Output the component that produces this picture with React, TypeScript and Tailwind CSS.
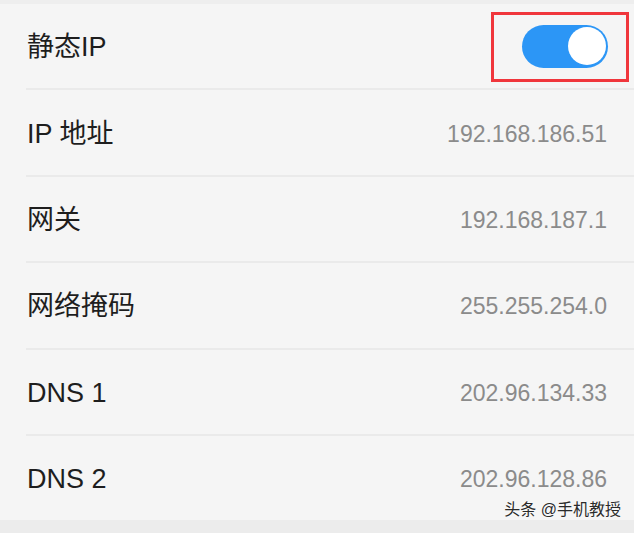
import React from 'react'

interface Row {
  label: string
  value?: string
}

const rows: Row[] = [
  { label: '静态IP' },
  { label: 'IP 地址', value: '192.168.186.51' },
  { label: '网关', value: '192.168.187.1' },
  { label: '网络掩码', value: '255.255.254.0' },
  { label: 'DNS 1', value: '202.96.134.33' },
  { label: 'DNS 2', value: '202.96.128.86' },
]

function Toggle() {
  return (
    <div className="relative">
      {/* annotation box */}
      <div className="absolute -left-[31px] -right-[21px] -top-[13px] -bottom-[14px] border-[3px] border-[#f0363c]" />
      <div className="w-[86px] h-[43px] rounded-full bg-[#2c96f6] flex items-center justify-end pr-[2.5px]">
        <div className="w-[38px] h-[38px] rounded-full bg-white" />
      </div>
    </div>
  )
}

export default function App() {
  return (
    <div className="relative w-[634px] h-[533px] overflow-hidden bg-[#f5f5f5] flex flex-col [font-family:'Liberation_Sans','Noto_Sans_CJK_SC',sans-serif]">
      <div className="h-[4px] bg-[#eeeeee]" />

      {rows.map((row, i) => (
        <div key={row.label}>
          {i > 0 && <div className="ml-[26px] h-[2px] bg-[#eaeaea]" />}
          <div className={`h-[84.4px] flex items-center justify-between pl-[27px] ${row.value ? 'pr-[27px]' : 'pr-[26px]'}`}>
            <span className="mt-[3px] text-[27px] leading-none text-[#1e1e1e]">{row.label}</span>
            {row.value ? (
              <span className="mt-[3px] text-[23px] leading-none text-[#8b8b8b]">{row.value}</span>
            ) : (
              <Toggle />
            )}
          </div>
        </div>
      ))}

      <div className="flex-1 bg-[#ececec]" />

      {/* watermark */}
      <div className="absolute right-[13px] bottom-[15px] text-[16px] leading-none text-[#2a2a2a] [text-shadow:0_0_2px_#ffffff]">
        头条 @手机教授
      </div>
    </div>
  )
}
